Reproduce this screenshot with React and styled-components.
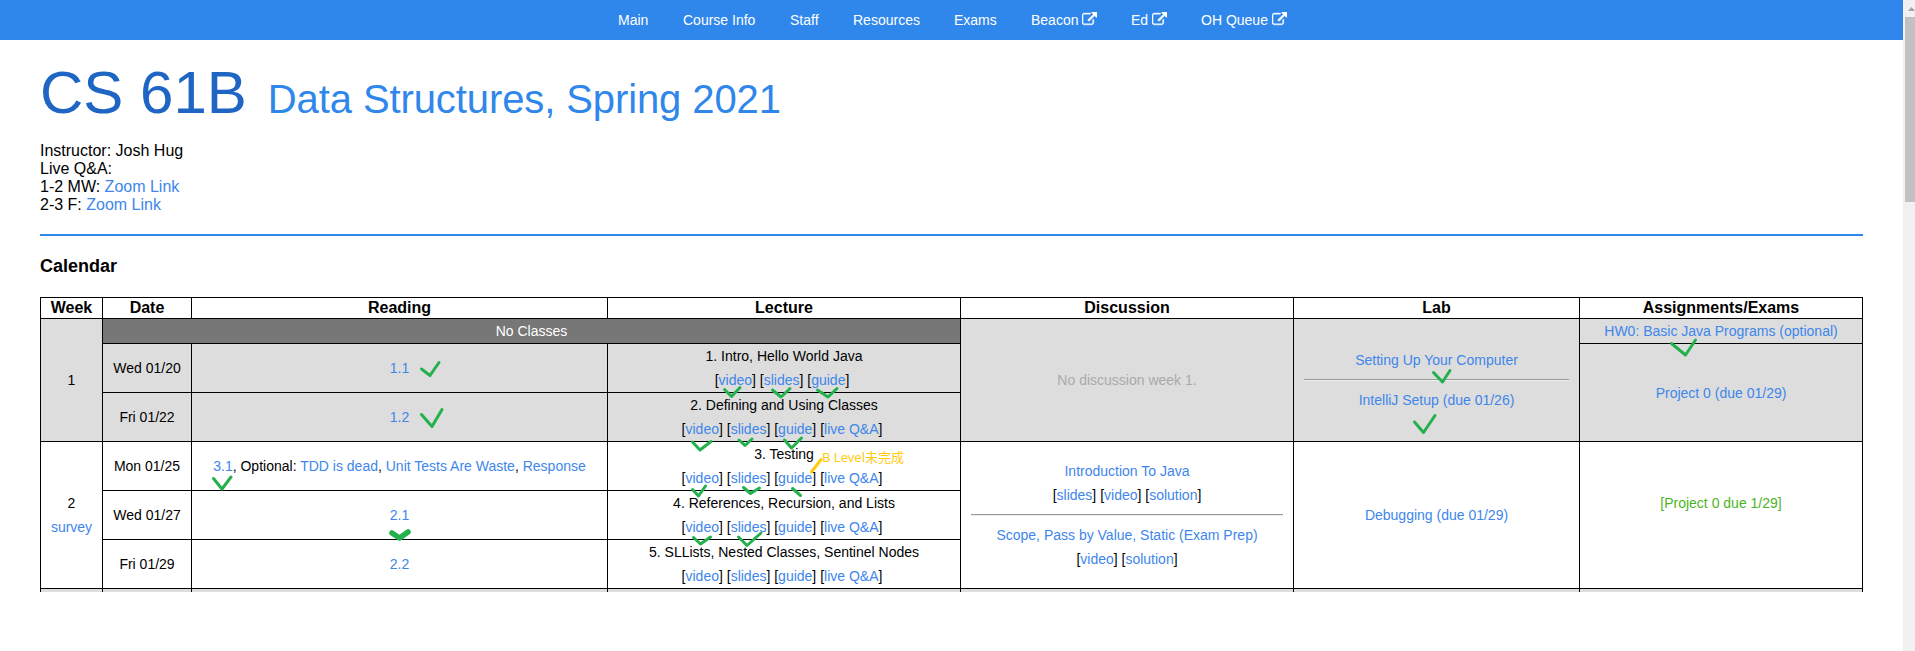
import React from "react";
import styled, { createGlobalStyle, css } from "styled-components";

const Global = createGlobalStyle`
  * { box-sizing: border-box; }
  html, body { margin: 0; height: 651px; overflow: hidden; background: #fff; }
  body { font-family: "Liberation Sans", Arial, sans-serif; color: #000; }
`;

const Page = styled.div`
  position: relative;
  display: flex;
  width: 1915px;
  height: 651px;
  overflow: hidden;
`;
const Main = styled.div`width: 1903px; flex: none;`;

const Nav = styled.nav`
  height: 40px;
  display: flex;
  justify-content: center;
  gap: 34px;
  padding-left: 2px;
  background: #2f87eb;
  line-height: 40px;
  font-size: 14px;
`;
const NavLink = styled.a`
  color: #fff;
  display: flex;
  align-items: center;
  gap: 4px;
  white-space: nowrap;
  width: ${(p) => p.$w}px;
  svg { flex: none; margin-top: -2px; }
`;

const Content = styled.main`padding: 0 40px;`;
const Title = styled.h1`
  margin: 0;
  padding-top: 17px;
  display: flex;
  align-items: baseline;
  gap: 21px;
  height: 102px;
  font-weight: 400;
  font-size: 60px;
  line-height: 72px;
  color: #1f66c4;
  white-space: nowrap;
`;
const Subtitle = styled.span`font-size: 40px; letter-spacing: -0.1px; color: #2f87eb;`;
const Info = styled.p`
  margin: 0;
  height: 92px;
  font-size: 16px;
  line-height: 18px;
`;
const Rule = styled.hr`margin: 0; border: 0; height: 2px; background: #2f87eb;`;
const Heading = styled.h2`
  margin: 0;
  height: 61px;
  padding-top: 20px;
  font-size: 18px;
  line-height: 21px;
`;

const Calendar = styled.div`
  width: 1823px;
  height: 295px;
  overflow: hidden;
  display: grid;
  grid-template-columns: 61px 88px 415px 352px 332px 285px 282px;
  grid-template-rows: 20px 24px 48px 48px 48px 48px 48px 4px;
  gap: 1px;
  padding: 1px 1px 0;
  background: #000;
`;
const tones = { plain: "#fff", shaded: "#ddd", holiday: "#777" };
const Cell = styled.div`
  grid-column: ${(p) => p.$col};
  grid-row: ${(p) => p.$row};
  background: ${(p) => tones[p.$tone || "plain"]};
  display: flex;
  flex-direction: column;
  justify-content: center;
  text-align: center;
  font-size: 14px;
  line-height: 24px;
  white-space: nowrap;
  color: ${(p) => p.$color || "#000"};
  ${(p) => p.$head && css`font-weight: 700; font-size: 16px; line-height: 20px;`}
`;
const Link = styled.a`color: #3e86ec;`;
const LinkLine = styled.div`padding-right: ${(p) => (p.$trailing ? 4 : 0)}px;`;
const Divider = styled.hr`
  margin: 7px 10px;
  height: 2px;
  border: 0;
  border-top: 1px solid #999;
  border-bottom: 1px solid #eee;
`;

const Scrollbar = styled.div`
  width: 12px;
  height: 651px;
  background: #f1f1f1;
  padding: 7px 0 0 2px;
  overflow: hidden;
`;
const Arrow = styled.svg`display: block; margin-left: 3px; width: 7px; height: 4px;`;
const Thumb = styled.div`margin-top: 6px; height: 185px; background: #c1c1c1;`;

const Ink = styled.svg`
  position: absolute;
  left: 0;
  top: 0;
  pointer-events: none;
  fill: none;
  stroke: #22b14c;
  stroke-linecap: round;
  stroke-linejoin: round;
`;
const Note = styled.span`
  position: absolute;
  left: 822px;
  top: 448px;
  font: 13px/18px "Noto Sans", "Noto Sans CJK SC", sans-serif;
  color: #ffc90e;
  white-space: nowrap;
`;

const ExternalIcon = () => (
  <svg width="15" height="15" viewBox="0 0 1792 1792" fill="#fff" stroke="#fff" strokeWidth="50">
    <path d="M1408 928v320q0 119-84.500 203.500t-203.500 84.500h-832q-119 0-203.500-84.500t-84.500-203.500v-832q0-119 84.500-203.500t203.500-84.500h704q14 0 23 9t9 23v64q0 14-9 23t-23 9h-704q-66 0-113 47t-47 113v832q0 66 47 113t113 47h832q66 0 113-47t47-113v-320q0-14 9-23t23-9h64q14 0 23 9t9 23zm384-864v512q0 26-19 45t-45 19-45-19l-176-176-652 652q-10 10-23 10t-23-10l-114-114q-10-10-10-23t10-23l652-652-176-176q-19-19-19-45t19-45 45-19h512q26 0 45 19t19 45z" />
  </svg>
);

const navItems = [
  ["Main", 31], ["Course Info", 73], ["Staff", 29], ["Resources", 67], ["Exams", 43],
  ["Beacon", 66, true], ["Ed", 36, true], ["OH Queue", 86, true],
];

const Links = ({ items, trailing }) => (
  <LinkLine $trailing={trailing}>
    {items.map((t, i) => (
      <React.Fragment key={t}>{i > 0 && " "}[<Link>{t}</Link>]</React.Fragment>
    ))}
  </LinkLine>
);
const base = ["video", "slides", "guide"];
const full = [...base, "live Q&A"];
const days = [
  { row: 3, tone: "shaded", date: "Wed 01/20", reading: <Link>1.1</Link>, lecture: "1. Intro, Hello World Java", links: base },
  { row: 4, tone: "shaded", date: "Fri 01/22", reading: <Link>1.2</Link>, lecture: "2. Defining and Using Classes", links: full },
  {
    row: 5, date: "Mon 01/25", lecture: "3. Testing", links: full,
    reading: <><Link>3.1</Link>, Optional: <Link>TDD is dead</Link>, <Link>Unit Tests Are Waste</Link>, <Link>Response</Link></>,
  },
  { row: 6, date: "Wed 01/27", reading: <Link>2.1</Link>, lecture: "4. References, Recursion, and Lists", links: full },
  { row: 7, date: "Fri 01/29", reading: <Link>2.2</Link>, lecture: "5. SLLists, Nested Classes, Sentinel Nodes", links: full },
];
const heads = ["Week", "Date", "Reading", "Lecture", "Discussion", "Lab", "Assignments/Exams"];

const checks = [
  "M421.500 369l8.500 6.500 9-13", "M421.500 414.500l10.500 12 10-17", "M213.500 478.500l8.500 10.500 9-12",
  "M724.500 389.500l7 7 8.500-9", "M772.500 390l8.500 7 9-8.500", "M817.500 390l10.500 7 9-8.500",
  "M692.500 442l7.500 8 11-8.500", "M739 440l6 5.500 7-6.500", "M784.500 440l7 8 10-10",
  "M692.500 489.500l6 6.500 7-10", "M743.500 487.500l7 6 9-5.500", "M792.500 488.500l8 7",
  "M693.500 537.500l7 6.500 10-7", "M738.500 537l8.500 8.500 14-12.500",
  "M1433.500 372.500l9 9.500 7.500-11.500", "M1414.500 422l9 10.500 11.500-17", "M1671.500 343.500l14 11.500 10-15",
];

export default function App() {
  return (
    <Page>
      <Global />
      <Main>
        <Nav>
          {navItems.map(([label, w, ext]) => (
            <NavLink key={label} $w={w}>{label}{ext && <ExternalIcon />}</NavLink>
          ))}
        </Nav>
        <Content>
          <Title>CS 61B<Subtitle>Data Structures, Spring 2021</Subtitle></Title>
          <Info>
            Instructor: Josh Hug<br />Live Q&amp;A:<br />
            1-2 MW: <Link>Zoom Link</Link><br />2-3 F: <Link>Zoom Link</Link>
          </Info>
          <Rule />
          <Heading>Calendar</Heading>
          <Calendar>
            {heads.map((h, i) => <Cell key={h} $head $col={i + 1} $row={1}>{h}</Cell>)}
            <Cell $col={1} $row="2 / 5" $tone="shaded">1</Cell>
            <Cell $col="2 / 5" $row={2} $tone="holiday" $color="#fff">No Classes</Cell>
            <Cell $col={5} $row="2 / 5" $tone="shaded" $color="#aaa">No discussion week 1.</Cell>
            <Cell $col={6} $row="2 / 5" $tone="shaded">
              <Link>Setting Up Your Computer</Link><Divider /><Link>IntelliJ Setup (due 01/26)</Link>
            </Cell>
            <Cell $col={7} $row={2} $tone="shaded"><Link>HW0: Basic Java Programs (optional)</Link></Cell>
            <Cell $col={7} $row="3 / 5" $tone="shaded"><Link>Project 0 (due 01/29)</Link></Cell>
            {days.map((d) => (
              <React.Fragment key={d.row}>
                <Cell $col={2} $row={d.row} $tone={d.tone}>{d.date}</Cell>
                <Cell $col={3} $row={d.row} $tone={d.tone}><div>{d.reading}</div></Cell>
                <Cell $col={4} $row={d.row} $tone={d.tone}><div>{d.lecture}</div><Links trailing items={d.links} /></Cell>
              </React.Fragment>
            ))}
            <Cell $col={1} $row="5 / 8">2<Link>survey</Link></Cell>
            <Cell $col={5} $row="5 / 8">
              <Link>Introduction To Java</Link>
              <Links items={["slides", "video", "solution"]} />
              <Divider />
              <Link>Scope, Pass by Value, Static (Exam Prep)</Link>
              <Links items={["video", "solution"]} />
            </Cell>
            <Cell $col={6} $row="5 / 8"><Link>Debugging (due 01/29)</Link></Cell>
            <Cell $col={7} $row="5 / 8" $color="#4db51f"><div>[Project 0 due 1/29]</div><div>&nbsp;</div></Cell>
            {heads.map((h, i) => <Cell key={h} $tone="shaded" $col={i + 1} $row={8} />)}
          </Calendar>
        </Content>
      </Main>
      <Scrollbar>
        <Arrow viewBox="0 0 7 4"><path d="M0 4L3.500 0 7 4z" fill="#a3a3a3" /></Arrow>
        <Thumb />
      </Scrollbar>
      <Ink width="1915" height="651">
        {checks.map((d) => <path key={d} d={d} strokeWidth="3" />)}
        <path d="M392 533l7.500 5 8.500-6" strokeWidth="5.500" />
        <path d="M811.500 472l9.500-12.500" stroke="#ffc90e" strokeWidth="3" />
      </Ink>
      <Note>B Level未完成</Note>
    </Page>
  );
}
